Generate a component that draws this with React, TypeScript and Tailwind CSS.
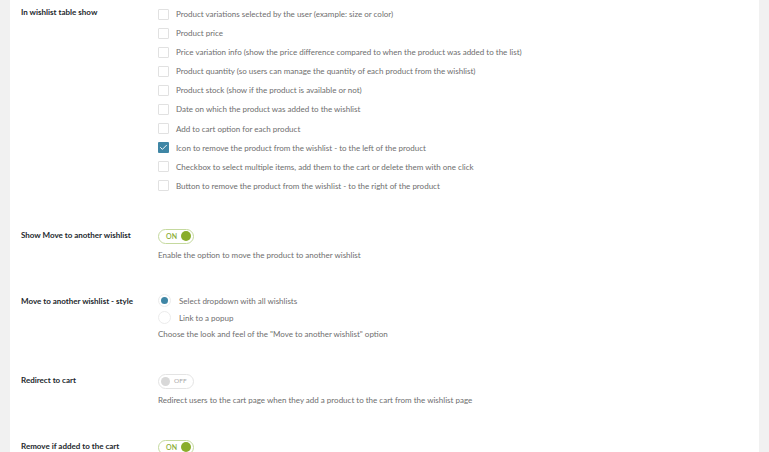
import { Check } from "lucide-react";

const tableOptions = [
  { label: "Product variations selected by the user (example: size or color)", checked: false },
  { label: "Product price", checked: false },
  { label: "Price variation info (show the price difference compared to when the product was added to the list)", checked: false },
  { label: "Product quantity (so users can manage the quantity of each product from the wishlist)", checked: false },
  { label: "Product stock (show if the product is available or not)", checked: false },
  { label: "Date on which the product was added to the wishlist", checked: false },
  { label: "Add to cart option for each product", checked: false },
  { label: "Icon to remove the product from the wishlist - to the left of the product", checked: true },
  { label: "Checkbox to select multiple items, add them to the cart or delete them with one click", checked: false },
  { label: "Button to remove the product from the wishlist - to the right of the product", checked: false },
];

function Toggle({ on }: { on: boolean }) {
  if (on) {
    return (
      <div className="flex items-center justify-between w-[36px] h-[15px] rounded-full border border-[#c5d99e] bg-white pl-[7px] pr-[2px]">
        <span className="text-[7px] font-semibold text-[#8aad35] leading-none">ON</span>
        <span className="w-[10px] h-[10px] rounded-full bg-[#8aad2b]" />
      </div>
    );
  }
  return (
    <div className="flex items-center gap-[4px] w-[36px] h-[15px] rounded-full border border-[#e4e4e4] bg-white pl-[2px]">
      <span className="w-[9px] h-[9px] rounded-full bg-[#d8d8d8]" />
      <span className="text-[6.5px] text-[#a8a8a8] leading-none">OFF</span>
    </div>
  );
}

function Row({ label, children, className, labelClass }: { label: string; children: React.ReactNode; className?: string; labelClass?: string }) {
  return (
    <div className={"flex " + (className ?? "")}>
      <div className={"w-[137px] text-[8px] font-bold text-[#23282d] leading-[10px] " + (labelClass ?? "")}>{label}</div>
      <div className="flex-1">{children}</div>
    </div>
  );
}

const desc = "text-[8px] text-[#6e6e6e] leading-[11px]";

export default function App() {
  return (
    <div className="w-[769px] h-[452px] overflow-hidden bg-[#f1f1f1] flex" style={{ fontFamily: "Lato, 'Open Sans', sans-serif" }}>
      <div className="ml-[10px] w-[749px] h-full bg-white pl-[11px] pt-[8.5px]">
        <Row label="In wishlist table show" labelClass="-mt-[1.5px]">
          <div className="flex flex-col gap-[8.1px]">
            {tableOptions.map((o) => (
              <label key={o.label} className="flex items-center gap-[7px] h-[11px]">
                {o.checked ? (
                  <span className="w-[11px] h-[11px] shrink-0 rounded-[1px] bg-[#3f86a5] flex items-center justify-center">
                    <Check size={9} strokeWidth={2.5} className="text-white" />
                  </span>
                ) : (
                  <span className="w-[11px] h-[11px] shrink-0 rounded-[1px] border border-[#e1e1e1] bg-white" />
                )}
                <span className="text-[8px] text-[#6e6e6e] leading-none">{o.label}</span>
              </label>
            ))}
          </div>
        </Row>

        <Row label="Show Move to another wishlist" className="mt-[37.5px]" labelClass="pt-[1px]">
          <Toggle on />
          <p className={"mt-[6.5px] " + desc}>Enable the option to move the product to another wishlist</p>
        </Row>

        <Row label="Move to another wishlist - style" className="mt-[33px]" labelClass="pt-[1.5px]">
          <div className="flex items-center gap-[8px] h-[13px]">
            <span className="w-[13px] h-[13px] rounded-full border border-[#ececec] flex items-center justify-center">
              <span className="w-[7px] h-[7px] rounded-full bg-[#3f86a5]" />
            </span>
            <span className="text-[8px] text-[#6e6e6e] leading-none">Select dropdown with all wishlists</span>
          </div>
          <div className="flex items-center gap-[8px] h-[13px] mt-[4px]">
            <span className="w-[13px] h-[13px] rounded-full border border-[#ececec]" />
            <span className="text-[8px] text-[#6e6e6e] leading-none">Link to a popup</span>
          </div>
          <p className={"mt-[5px] " + desc}>Choose the look and feel of the "Move to another wishlist" option</p>
        </Row>

        <Row label="Redirect to cart" className="mt-[33.5px]" labelClass="pt-[1px]">
          <Toggle on={false} />
          <p className={"mt-[6.5px] " + desc}>Redirect users to the cart page when they add a product to the cart from the wishlist page</p>
        </Row>

        <Row label="Remove if added to the cart" className="mt-[33.5px]" labelClass="pt-[1px]">
          <Toggle on />
        </Row>
      </div>
    </div>
  );
}
